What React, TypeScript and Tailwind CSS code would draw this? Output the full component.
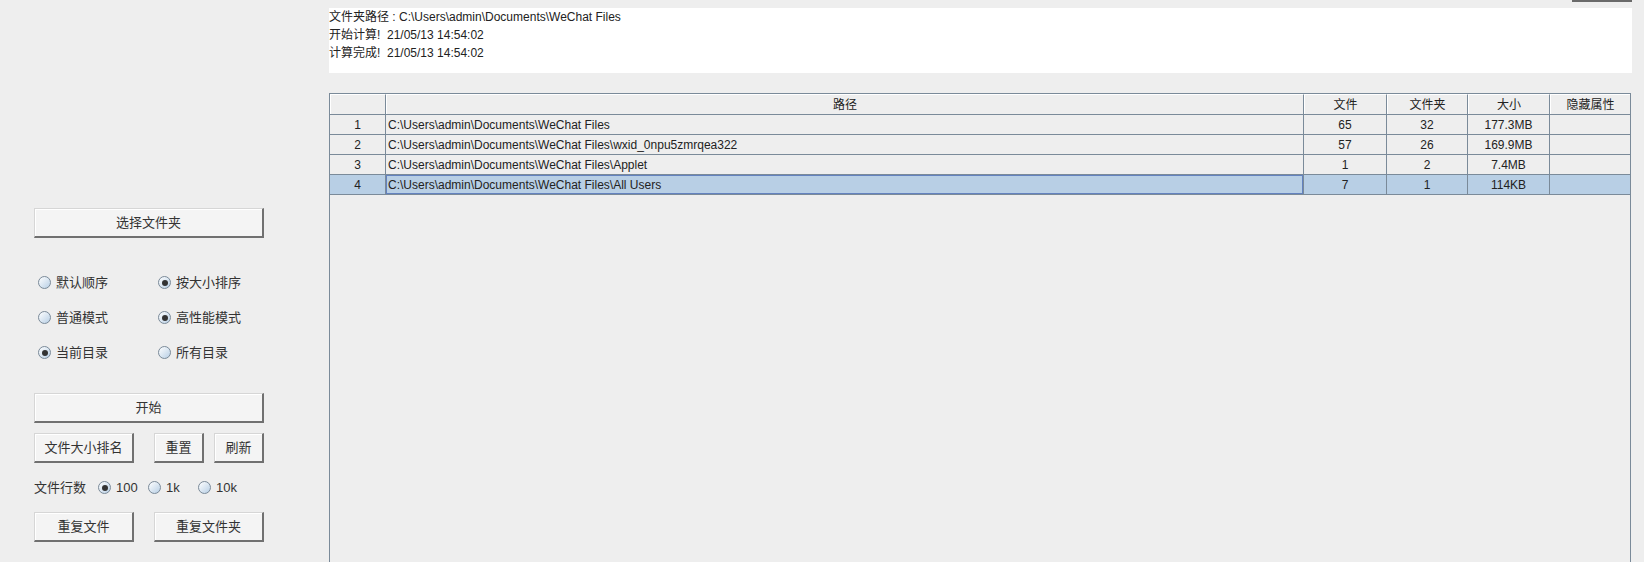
import React from "react";

const FONT = { fontFamily: '"Liberation Sans", Arial, "Noto Sans CJK SC", sans-serif' };

function Radio({ checked, label, className = "" }: { checked?: boolean; label: string; className?: string }) {
  return (
    <div className={"flex items-center " + className}>
      <div className="w-[13px] h-[13px] rounded-full border border-[#7a8a99] bg-gradient-to-br from-white to-[#b8cfe5] flex items-center justify-center shrink-0">
        {checked && <div className="w-[6px] h-[6px] rounded-full bg-[#333333]" />}
      </div>
      <span className="ml-[5px] text-[13px] text-[#333333] leading-none">{label}</span>
    </div>
  );
}

function Btn({ label, className = "" }: { label: string; className?: string }) {
  return (
    <div
      className={
        "h-[30px] flex items-center justify-center bg-[#f4f4f4] border-t border-l border-[#d6d6d6] border-b-2 border-r-2 border-b-[#707070] border-r-[#707070] text-[13px] text-[#333333] shadow-[inset_1px_1px_0_#ffffff] " +
        className
      }
    >
      {label}
    </div>
  );
}

const COLS = [56, 918, 83, 81, 82, 81];
const HEAD = ["", "路径", "文件", "文件夹", "大小", "隐藏属性"];
const ROWS = [
  ["1", "C:\\Users\\admin\\Documents\\WeChat Files", "65", "32", "177.3MB", ""],
  ["2", "C:\\Users\\admin\\Documents\\WeChat Files\\wxid_0npu5zmrqea322", "57", "26", "169.9MB", ""],
  ["3", "C:\\Users\\admin\\Documents\\WeChat Files\\Applet", "1", "2", "7.4MB", ""],
  ["4", "C:\\Users\\admin\\Documents\\WeChat Files\\All Users", "7", "1", "114KB", ""],
];

export default function App() {
  return (
    <div className="w-[1644px] h-[562px] bg-[#eeeeee] flex overflow-hidden" style={FONT}>
      {/* left panel */}
      <div className="w-[329px] shrink-0 flex flex-col pl-[34px] pt-[208px]">
        <Btn label="选择文件夹" className="w-[230px] h-[30px]" />
        <div className="mt-[38px] flex flex-col gap-[22px] pl-[4px]">
          <div className="flex h-[13px]">
            <Radio label="默认顺序" className="w-[120px]" />
            <Radio label="按大小排序" checked />
          </div>
          <div className="flex h-[13px]">
            <Radio label="普通模式" className="w-[120px]" />
            <Radio label="高性能模式" checked />
          </div>
          <div className="flex h-[13px]">
            <Radio label="当前目录" checked className="w-[120px]" />
            <Radio label="所有目录" />
          </div>
        </div>
        <Btn label="开始" className="w-[230px] mt-[34px]" />
        <div className="flex mt-[10px]">
          <Btn label="文件大小排名" className="w-[100px]" />
          <Btn label="重置" className="w-[50px] ml-[20px]" />
          <Btn label="刷新" className="w-[50px] ml-[10px]" />
        </div>
        <div className="flex items-center h-[13px] mt-[18px]">
          <span className="text-[13px] text-[#333333] leading-none w-[64px]">文件行数</span>
          <Radio label="100" checked className="w-[50px]" />
          <Radio label="1k" className="w-[50px]" />
          <Radio label="10k" />
        </div>
        <div className="flex mt-[18px]">
          <Btn label="重复文件" className="w-[100px]" />
          <Btn label="重复文件夹" className="w-[110px] ml-[20px]" />
        </div>
      </div>

      {/* right area */}
      <div className="flex flex-col w-[1303px]">
        <div className="h-[8px] flex justify-end">
          <div className="w-[60px] h-[2px] bg-[#6a6a6a]" />
        </div>
        <div className="h-[65px] bg-white text-[12px] leading-[18px] text-[#222222]">
          <div>文件夹路径 : C:\Users\admin\Documents\WeChat Files</div>
          <div>开始计算!&nbsp; 21/05/13 14:54:02</div>
          <div>计算完成!&nbsp; 21/05/13 14:54:02</div>
        </div>
        <div className="h-[20px]" />
        {/* table scroll pane */}
        <div className="flex-1 w-[1302px] border-l border-r border-t border-[#7a8a99] text-[12px] text-[#222222]">
          <div className="flex h-[21px] border-b border-[#7a8a99]">
            {HEAD.map((h, i) => (
              <div
                key={i}
                style={{ width: COLS[i] - (i === COLS.length - 1 ? 1 : 0) }}
                className={
                  "flex items-center justify-center border-l border-t border-white " +
                  (i < COLS.length - 1 ? "border-r border-r-[#7a8a99]" : "")
                }
              >
                {h}
              </div>
            ))}
          </div>
          {ROWS.map((r, ri) => {
            const sel = ri === 3;
            return (
              <div key={ri} className={"flex h-[20px] border-b border-[#7a8a99] " + (sel ? "bg-[#b8cfe5]" : "")}>
                {r.map((c, ci) => (
                  <div
                    key={ci}
                    style={{ width: COLS[ci] - (ci === COLS.length - 1 ? 1 : 0) }}
                    className={
                      "flex items-center whitespace-nowrap overflow-hidden " +
                      (ci === 1 ? "justify-start pl-[2px] " : "justify-center ") +
                      (ci < COLS.length - 1 ? "border-r border-[#7a8a99] " : "") +
                      (sel && ci === 1 ? "shadow-[inset_0_0_0_1px_#6382bf] " : "")
                    }
                  >
                    {c}
                  </div>
                ))}
              </div>
            );
          })}
        </div>
      </div>
    </div>
  );
}
